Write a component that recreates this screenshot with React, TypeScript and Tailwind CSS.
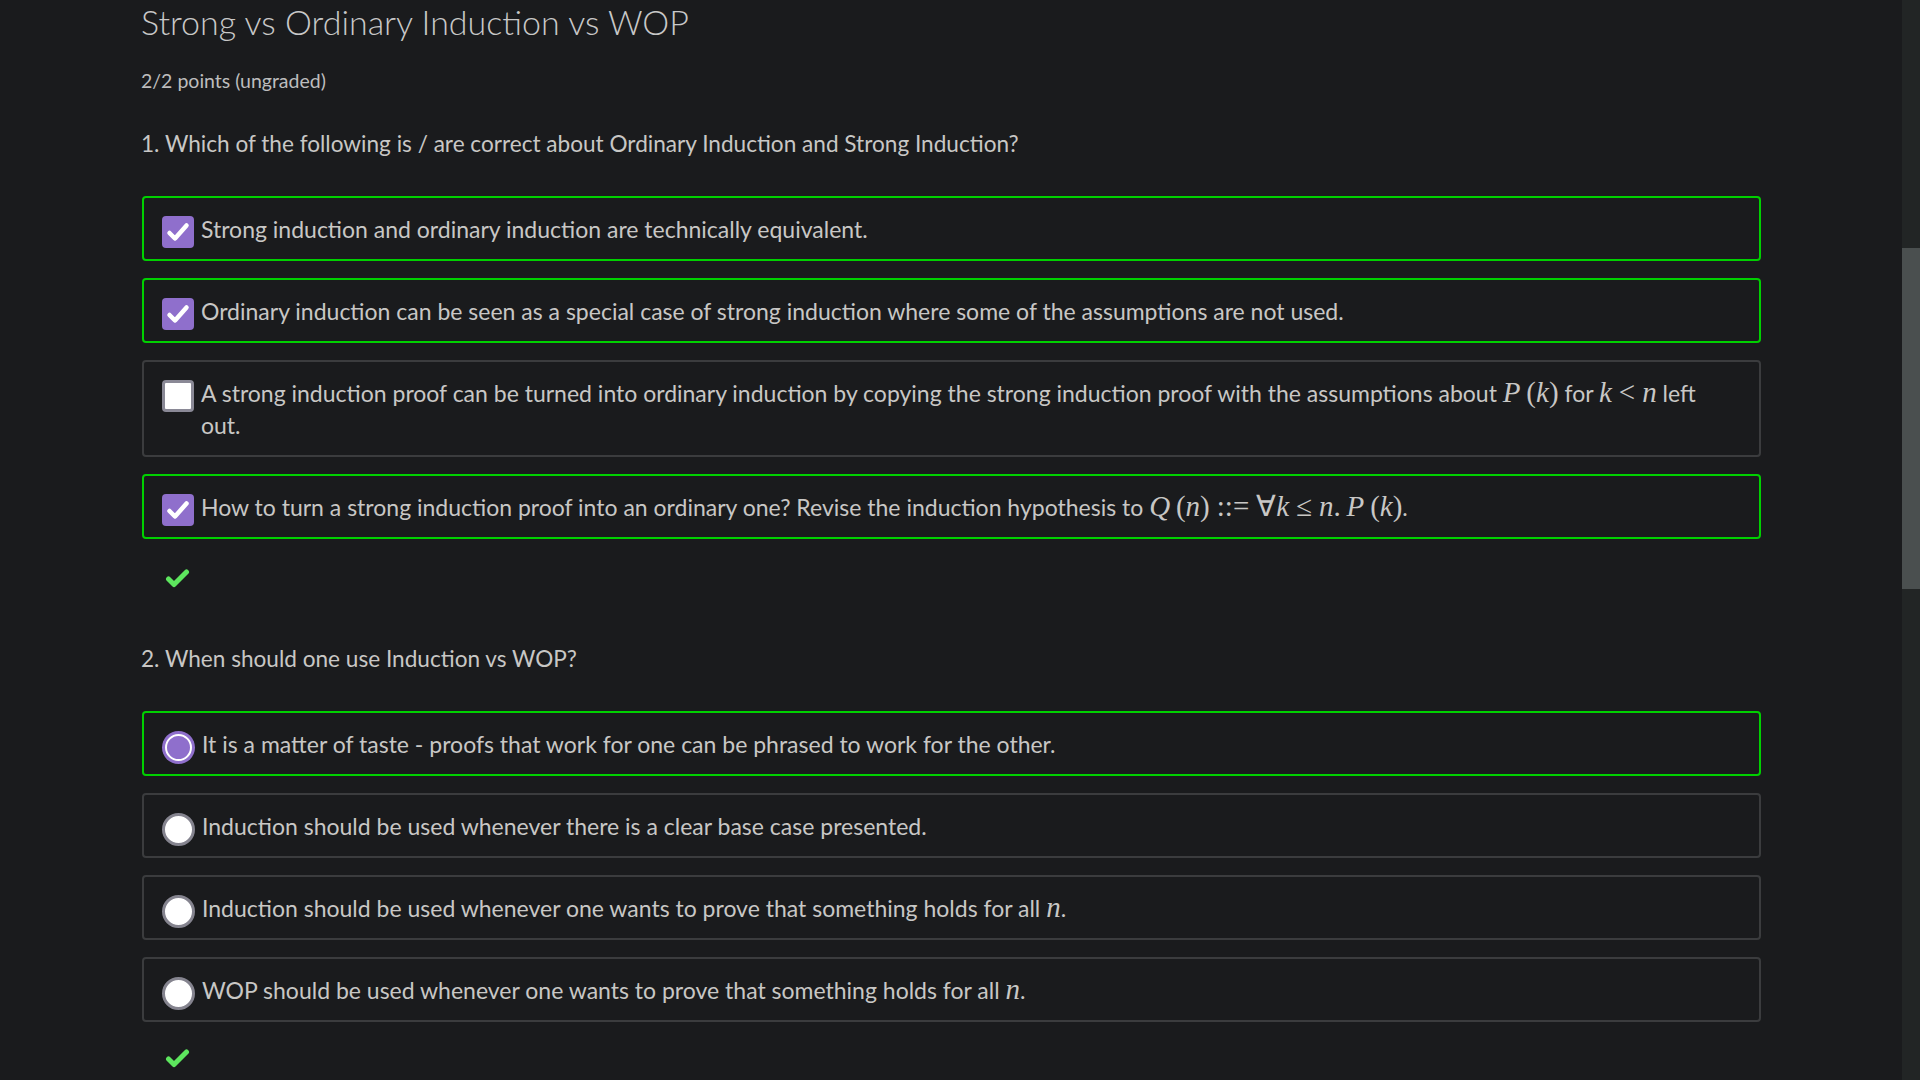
import React from 'react';

type Opt = { label: React.ReactNode; selected?: boolean };

const I = ({ children }: { children: React.ReactNode }) => (
  <span className="italic">{children}</span>
);

const M = ({ children }: { children: React.ReactNode }) => (
  <span className="font-['Liberation_Serif',serif] text-[29px] leading-none not-italic">{children}</span>
);

// spacer for the gaps KaTeX puts around relations
const S = () => <span className="inline-block w-[7px]" />;

const q1: Opt[] = [
  { label: 'Strong induction and ordinary induction are technically equivalent.', selected: true },
  {
    label: 'Ordinary induction can be seen as a special case of strong induction where some of the assumptions are not used.',
    selected: true,
  },
  {
    label: (
      <>
        A strong induction proof can be turned into ordinary induction by copying the strong induction proof with the
        assumptions about{' '}
        <M>
          <I>P</I>&#8201;(<I>k</I>)
        </M>{' '}
        for{' '}
        <M>
          <I>k</I>
          <S />&lt;<S />
          <I>n</I>
        </M>{' '}
        left
        <br />
        out.
      </>
    ),
  },
  {
    label: (
      <>
        How to turn a strong induction proof into an ordinary one? Revise the induction hypothesis to{' '}
        <M>
          <I>Q</I>&#8201;(<I>n</I>)<S />::=<S />∀<I>k</I>
          <S />≤<S />
          <I>n</I>.&#8201;<I>P</I>&#8201;(<I>k</I>)
        </M>
        .
      </>
    ),
    selected: true,
  },
];

const q2: Opt[] = [
  { label: 'It is a matter of taste - proofs that work for one can be phrased to work for the other.', selected: true },
  { label: 'Induction should be used whenever there is a clear base case presented.' },
  {
    label: (
      <>
        Induction should be used whenever one wants to prove that something holds for all{' '}
        <M>
          <I>n</I>
        </M>
        .
      </>
    ),
  },
  {
    label: (
      <>
        WOP should be used whenever one wants to prove that something holds for all{' '}
        <M>
          <I>n</I>
        </M>
        .
      </>
    ),
  },
];

const Checkbox = ({ on }: { on?: boolean }) =>
  on ? (
    <div className="w-8 h-8 mt-[3px] -mb-[3px] shrink-0 rounded-[4px] bg-[#8f6fcc] flex items-center justify-center">
      <svg width="24" height="22" viewBox="0 0 24 22">
        <path d="M3.5 12 L9 17.5 L20.5 4.5" fill="none" stroke="#fff" strokeWidth="4.5" strokeLinecap="round" strokeLinejoin="round" />
      </svg>
    </div>
  ) : (
    <div className="w-8 h-8 mt-[3px] -mb-[3px] shrink-0 rounded-[4px] bg-white border-[3px] border-[#8a8996]" />
  );

const Radio = ({ on }: { on?: boolean }) =>
  on ? (
    <div className="w-[33px] h-[33px] mt-[3px] -mb-[4px] shrink-0 rounded-full bg-[#8f6fcc] p-[3px]">
      <div className="w-full h-full rounded-full border-2 border-white bg-[#8f6fcc]" />
    </div>
  ) : (
    <div className="w-[33px] h-[33px] mt-[3px] -mb-[4px] shrink-0 rounded-full bg-white border-[3px] border-[#85848f]" />
  );

const Correct = () => (
  <div className="pl-6">
    <svg width="25" height="20" viewBox="0 0 25 20">
      <path d="M3.5 11 L9 16.5 L21.5 4" fill="none" stroke="#5de65e" strokeWidth="5" strokeLinecap="round" strokeLinejoin="round" />
    </svg>
  </div>
);

const OptionRow = ({ opt, kind }: { opt: Opt; kind: 'check' | 'radio' }) => (
  <div
    className={`flex items-start gap-[7px] rounded-[4px] border-2 pl-[18px] pr-5 pt-[15px] pb-[14px] ${
      opt.selected ? 'border-[#00d000]' : 'border-[#3b3c3e]'
    }`}
  >
    {kind === 'check' ? <Checkbox on={opt.selected} /> : <Radio on={opt.selected} />}
    <p className="text-[23px] leading-[32px] text-[#c8c7c5]">{opt.label}</p>
  </div>
);

export default function App() {
  return (
    <div className="h-screen overflow-hidden flex bg-[#1a1b1d] font-['Lato',sans-serif]">
      <main className="flex-1 px-[141px] pt-[2px]">
        <h1 className="text-[34px] leading-[40px] font-light text-[#c8c8c8]">Strong vs Ordinary Induction vs WOP</h1>
        <p className="mt-[27px] text-[19.5px] leading-[24px] text-[#bdbdbd]">2/2 points (ungraded)</p>

        <p className="mt-9 text-[22.6px] leading-[30px] text-[#c8c7c5]">
          1. Which of the following is / are correct about Ordinary Induction and Strong Induction?
        </p>
        <div className="mt-[37px] ml-px flex flex-col gap-[17px]">
          {q1.map((o, i) => (
            <OptionRow key={i} opt={o} kind="check" />
          ))}
        </div>
        <div className="mt-[29px]">
          <Correct />
        </div>

        <p className="mt-[56px] text-[22.6px] leading-[30px] text-[#c8c7c5]">2. When should one use Induction vs WOP?</p>
        <div className="mt-[37px] ml-px flex flex-col gap-[17px]">
          {q2.map((o, i) => (
            <OptionRow key={i} opt={o} kind="radio" />
          ))}
        </div>
        <div className="mt-[26px]">
          <Correct />
        </div>
      </main>
      <div className="w-[18px] shrink-0 bg-[#222525] flex flex-col">
        <div className="h-[248px]" />
        <div className="h-[341px] bg-[#4a4f4f]" />
      </div>
    </div>
  );
}
